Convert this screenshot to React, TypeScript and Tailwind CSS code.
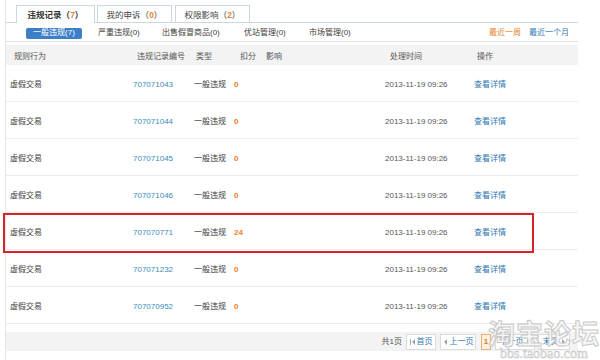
import React from "react";

const rows = [
  { id: "707071043", score: "0" },
  { id: "707071044", score: "0" },
  { id: "707071045", score: "0" },
  { id: "707071046", score: "0" },
  { id: "707070771", score: "24" },
  { id: "707071232", score: "0" },
  { id: "707070952", score: "0" },
];

function FirstIcon() {
  return (
    <svg width="5" height="6" viewBox="0 0 5 6" className="mr-[2px]">
      <rect x="0" y="0" width="1" height="6" fill="#9aa5ae" />
      <path d="M5 0 L2 3 L5 6 Z" fill="#9aa5ae" />
    </svg>
  );
}
function PrevIcon() {
  return (
    <svg width="4" height="6" viewBox="0 0 4 6" className="mr-[3px]">
      <path d="M4 0 L1 3 L4 6 Z" fill="#9aa5ae" />
    </svg>
  );
}
function NextIcon() {
  return (
    <svg width="4" height="6" viewBox="0 0 4 6" className="ml-[3px]">
      <path d="M0 0 L3 3 L0 6 Z" fill="#9aa5ae" />
    </svg>
  );
}

export default function App() {
  return (
    <div
      className="relative w-[600px] h-[360px] overflow-hidden bg-white text-[8px] text-[#404040]"
      style={{ fontFamily: '"Liberation Sans", "Noto Sans CJK SC", sans-serif' }}
    >
      <div className="ml-[5px] w-[573px] h-full border-l border-[#e4e9ee] pt-[5px]">
        {/* main tabs */}
        <div className="flex items-end h-[18px] border-b border-[#cdd7df] pl-[10px]">
          <div className="w-[79px] h-[18px] -mb-px pt-[2px] bg-white border border-b-0 border-[#cdd7df] flex items-center justify-center font-bold text-[8.5px] text-[#333]">
            违规记录（<span className="text-[#e8822a]">7</span>）
          </div>
          <div className="ml-[2px] w-[75px] h-[17px] pt-[2px] bg-white border border-b-0 border-[#cdd7df] flex items-center justify-center text-[8.5px] text-[#444]">
            我的申诉（<span className="text-[#e8822a] font-bold">0</span>）
          </div>
          <div className="ml-[3px] w-[75px] h-[17px] pt-[2px] bg-white border border-b-0 border-[#cdd7df] flex items-center justify-center text-[8.5px] text-[#444]">
            权限影响（<span className="text-[#e8822a] font-bold">2</span>）
          </div>
        </div>

        {/* sub tabs */}
        <div className="flex items-center h-[19px] pt-[2px] border-b border-[#dde4ea] pl-[20px] pr-[9px]">
          <div className="w-[56px] h-[11px] rounded-[2px] bg-[#3d7fc7] text-white flex items-center justify-center">
            一般违规(7)
          </div>
          <div className="ml-[16px] w-[64px]">严重违规(0)</div>
          <div className="w-[82px]">出售假冒商品(0)</div>
          <div className="w-[65px]">优站管理(0)</div>
          <div>市场管理(0)</div>
          <div className="ml-auto flex">
            <span className="text-[#e8822a]">最近一周</span>
            <span className="ml-[8px] text-[#2f78b0]">最近一个月</span>
          </div>
        </div>

        {/* header */}
        <div className="mt-[3px] h-[20px] pt-[3px] bg-[#f3f3f3] flex items-center pl-[8px] text-[#555]">
          <div className="w-[123px]">规则行为</div>
          <div className="w-[59px]">违规记录编号</div>
          <div className="w-[44px]">类型</div>
          <div className="w-[26px]">扣分</div>
          <div className="w-[124px]">影响</div>
          <div className="w-[87px]">处理时间</div>
          <div>操作</div>
        </div>

        {/* rows */}
        {rows.map((r) => (
          <div
            key={r.id}
            className="h-[37px] pt-[4px] flex items-center pl-[4px] border-b border-[#ececec]"
          >
            <div className="w-[123px]">虚假交易</div>
            <div className="w-[61px] text-[#3b8cb8]">{r.id}</div>
            <div className="w-[40px]">一般违规</div>
            <div className="w-[151px] text-[#e8822a] font-bold">{r.score}</div>
            <div className="w-[89px] text-[#555]">2013-11-19 09:26</div>
            <div className="text-[#2f78b0]">查看详情</div>
          </div>
        ))}

        {/* footer */}
        <div className="mt-[8px] h-[19px] bg-[#f3f3f3] flex items-center justify-end pr-[8px]">
          <span className="mr-[4px] text-[#555]">共1页</span>
          <div className="h-[16px] w-[30px] bg-white border border-[#dcdcdc] flex items-center justify-center text-[#2f78b0]">
            <FirstIcon />首页
          </div>
          <div className="ml-[4px] h-[16px] w-[36px] bg-white border border-[#dcdcdc] flex items-center justify-center text-[#2f78b0]">
            <PrevIcon />上一页
          </div>
          <div className="ml-[5px] h-[16px] w-[10px] bg-[#fff1dc] border border-[#eab27a] flex items-center justify-center text-[#e07b2a] font-bold">
            1
          </div>
          <div className="ml-[4px] h-[16px] w-[40px] bg-white border border-[#dcdcdc] flex items-center justify-center text-[#2f78b0]">
            下一页<NextIcon />
          </div>
          <div className="ml-[3px] h-[16px] w-[32px] bg-white border border-[#dcdcdc] flex items-center justify-center text-[#2f78b0]">
            末页<NextIcon />
          </div>
        </div>
      </div>

      {/* highlight box */}
      <div className="absolute left-[3px] top-[213px] w-[531px] h-[40px] border-2 border-[#d8232a] pointer-events-none" />

      {/* watermark */}
      <div className="absolute left-[488px] top-[319px] flex flex-col items-center opacity-90 pointer-events-none">
        <div
          className="text-[27px] leading-[28px] font-bold text-[#f7f7f7] [-webkit-text-stroke:1px_#c4c4c4] tracking-[1px]"
          style={{ fontFamily: '"Noto Sans CJK SC", sans-serif' }}
        >
          淘宝论坛
        </div>
        <div
          className="text-[14px] leading-[14px] text-[#f7f7f7] [-webkit-text-stroke:0.6px_#c4c4c4]"
          style={{ fontFamily: '"Liberation Serif", serif' }}
        >
          bbs.taobao.com
        </div>
      </div>
    </div>
  );
}
